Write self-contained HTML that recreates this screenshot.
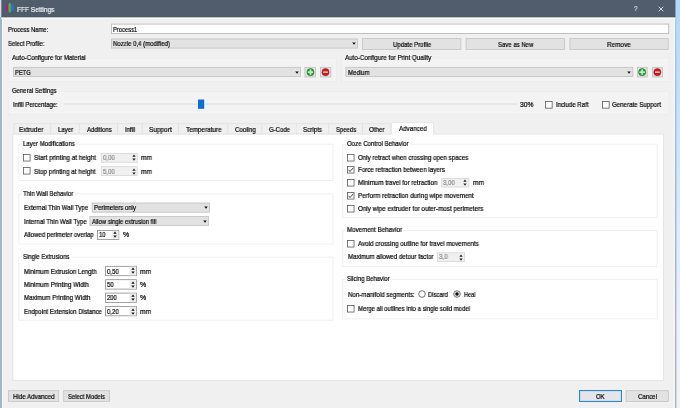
<!DOCTYPE html>
<html><head><meta charset="utf-8"><title>FFF Settings</title>
<style>
html,body{margin:0;padding:0;}
body{width:680px;height:408px;overflow:hidden;position:relative;background:#f0f0f0;font-family:"Liberation Sans", sans-serif;}
div,span,svg{position:absolute;display:block;}
span{will-change:transform;white-space:pre;line-height:8.0px;font-family:"Liberation Sans", sans-serif;-webkit-text-stroke:0.2px currentColor;transform-origin:0 0;}
svg{overflow:visible;}
</style></head><body>
<svg style="left:0;top:0" width="680" height="408" viewBox="0 0 680 408">
<rect x="0.00" y="0.00" width="680.00" height="408.00" fill="#f0f0f0"/>
<defs><linearGradient id="rs" x1="0" y1="0" x2="0" y2="1"><stop offset="0" stop-color="#b4d8f5"/><stop offset="0.3" stop-color="#c7e4fa"/><stop offset="0.55" stop-color="#dbecfb"/><stop offset="0.8" stop-color="#eaf2fa"/><stop offset="1" stop-color="#f0f3f6"/></linearGradient></defs>
<defs><linearGradient id="re" x1="0" y1="0" x2="0" y2="1"><stop offset="0" stop-color="#a6c9ea"/><stop offset="0.25" stop-color="#a6bdd2"/><stop offset="0.45" stop-color="#a8b5c1"/><stop offset="1" stop-color="#aab2ba"/></linearGradient></defs>
<rect x="675.40" y="0.00" width="4.60" height="408.00" fill="url(#rs)"/>
<rect x="673.80" y="17.00" width="1.20" height="391.00" fill="#fcfcfd"/>
<rect x="674.90" y="17.00" width="1.50" height="391.00" fill="url(#re)"/>
<rect x="0.00" y="0.00" width="1.40" height="17.00" fill="#cfe2f3"/>
<rect x="0.00" y="17.00" width="2.00" height="391.00" fill="#a1b5ce"/>
<rect x="2.00" y="17.00" width="1.20" height="391.00" fill="#f8f9fa"/>
<rect x="1.30" y="17.00" width="674.20" height="2.00" fill="#fbfcfd"/>
<rect x="1.30" y="0.00" width="674.20" height="16.40" fill="#515d6c"/>
<rect x="1.30" y="16.20" width="674.20" height="1.10" fill="#38424d"/>
<rect x="111.40" y="24.10" width="557.30" height="9.40" fill="#ffffff" stroke="#b4b4b4" stroke-width="0.8"/>
<rect x="111.40" y="39.00" width="246.00" height="9.10" fill="#e2e2e2" stroke="#c0c0c0" stroke-width="0.8"/>
<rect x="362.40" y="38.60" width="98.50" height="10.80" fill="#e2e2e2" stroke="#c4c4c4" stroke-width="0.8"/>
<rect x="466.10" y="38.60" width="98.50" height="10.80" fill="#e2e2e2" stroke="#c4c4c4" stroke-width="0.8"/>
<rect x="569.90" y="38.60" width="98.30" height="10.80" fill="#e2e2e2" stroke="#c4c4c4" stroke-width="0.8"/>
<rect x="8.40" y="58.00" width="328.20" height="23.60" fill="#f3f3f3" stroke="#ebebeb" stroke-width="0.8"/>
<rect x="10.50" y="54.60" width="77.00" height="6.00" fill="#f3f3f3"/>
<rect x="341.40" y="58.00" width="327.60" height="23.60" fill="#f3f3f3" stroke="#ebebeb" stroke-width="0.8"/>
<rect x="343.00" y="54.60" width="89.50" height="6.00" fill="#f3f3f3"/>
<rect x="8.40" y="91.60" width="660.60" height="22.80" fill="#f3f3f3" stroke="#ebebeb" stroke-width="0.8"/>
<rect x="10.50" y="88.20" width="47.75" height="6.00" fill="#f3f3f3"/>
<rect x="13.40" y="67.30" width="287.00" height="9.20" fill="#e2e2e2" stroke="#c0c0c0" stroke-width="0.8"/>
<rect x="304.90" y="67.30" width="10.50" height="9.70" fill="#e2e2e2" stroke="#c0c0c0" stroke-width="0.8"/>
<rect x="320.40" y="67.30" width="10.50" height="9.70" fill="#e2e2e2" stroke="#c0c0c0" stroke-width="0.8"/>
<rect x="345.90" y="67.30" width="287.00" height="9.20" fill="#e2e2e2" stroke="#c0c0c0" stroke-width="0.8"/>
<rect x="637.40" y="67.30" width="9.80" height="9.70" fill="#e2e2e2" stroke="#c0c0c0" stroke-width="0.8"/>
<rect x="652.40" y="67.30" width="10.20" height="9.70" fill="#e2e2e2" stroke="#c0c0c0" stroke-width="0.8"/>
<rect x="63.50" y="103.40" width="453.50" height="1.40" fill="#e3e3e3"/>
<rect x="198.00" y="99.50" width="6.20" height="9.30" fill="#0a6fd8"/>
<rect x="12.80" y="134.00" width="650.80" height="246.40" fill="#ffffff" stroke="#e0e0e0" stroke-width="0.8"/>
<rect x="14.15" y="123.80" width="376.70" height="10.10" fill="#f0f0f0" stroke="#e0e0e0" stroke-width="0.8"/>
<rect x="50.35" y="123.40" width="0.80" height="10.80" fill="#e0e0e0"/>
<rect x="79.10" y="123.40" width="0.80" height="10.80" fill="#e0e0e0"/>
<rect x="117.10" y="123.40" width="0.80" height="10.80" fill="#e0e0e0"/>
<rect x="141.80" y="123.40" width="0.80" height="10.80" fill="#e0e0e0"/>
<rect x="178.00" y="123.40" width="0.80" height="10.80" fill="#e0e0e0"/>
<rect x="227.40" y="123.40" width="0.80" height="10.80" fill="#e0e0e0"/>
<rect x="261.35" y="123.40" width="0.80" height="10.80" fill="#e0e0e0"/>
<rect x="295.85" y="123.40" width="0.80" height="10.80" fill="#e0e0e0"/>
<rect x="328.35" y="123.40" width="0.80" height="10.80" fill="#e0e0e0"/>
<rect x="362.10" y="123.40" width="0.80" height="10.80" fill="#e0e0e0"/>
<rect x="391.00" y="122.20" width="42.90" height="12.60" fill="#ffffff"/>
<path d="M391.4 134.3 V122.6 H433.5 V134.3" fill="none" stroke="#dedede" stroke-width="0.8"/>
<rect x="18.80" y="144.20" width="314.20" height="36.20" fill="none" stroke="#ececec" stroke-width="0.8"/>
<rect x="21.50" y="140.80" width="55.00" height="6.00" fill="#ffffff"/>
<rect x="18.80" y="193.90" width="314.20" height="50.20" fill="none" stroke="#ececec" stroke-width="0.8"/>
<rect x="21.50" y="190.50" width="53.50" height="6.00" fill="#ffffff"/>
<rect x="18.80" y="257.10" width="314.20" height="63.10" fill="none" stroke="#ececec" stroke-width="0.8"/>
<rect x="21.50" y="253.70" width="49.75" height="6.00" fill="#ffffff"/>
<rect x="342.80" y="144.20" width="314.30" height="73.50" fill="none" stroke="#ececec" stroke-width="0.8"/>
<rect x="345.50" y="140.80" width="64.75" height="6.00" fill="#ffffff"/>
<rect x="342.80" y="230.50" width="314.30" height="36.20" fill="none" stroke="#ececec" stroke-width="0.8"/>
<rect x="345.50" y="227.10" width="58.25" height="6.00" fill="#ffffff"/>
<rect x="342.80" y="279.30" width="314.30" height="39.60" fill="none" stroke="#ececec" stroke-width="0.8"/>
<rect x="345.50" y="275.90" width="45.75" height="6.00" fill="#ffffff"/>
<rect x="101.30" y="153.40" width="35.90" height="8.80" fill="#f0f0f0" stroke="#d6d6d6" stroke-width="0.8"/>
<rect x="101.30" y="166.70" width="35.90" height="8.90" fill="#f0f0f0" stroke="#d6d6d6" stroke-width="0.8"/>
<rect x="92.15" y="203.00" width="117.35" height="9.20" fill="#e2e2e2" stroke="#c0c0c0" stroke-width="0.8"/>
<rect x="89.90" y="216.40" width="118.60" height="9.20" fill="#e2e2e2" stroke="#c0c0c0" stroke-width="0.8"/>
<rect x="97.40" y="230.40" width="21.40" height="9.00" fill="#ffffff" stroke="#8c8c8c" stroke-width="0.8"/>
<rect x="111.60" y="230.80" width="6.80" height="8.20" fill="#eeeeee"/>
<rect x="105.60" y="266.30" width="30.90" height="9.40" fill="#ffffff" stroke="#8c8c8c" stroke-width="0.8"/>
<rect x="129.30" y="266.70" width="6.80" height="8.60" fill="#eeeeee"/>
<rect x="105.60" y="279.70" width="30.90" height="9.40" fill="#ffffff" stroke="#8c8c8c" stroke-width="0.8"/>
<rect x="129.30" y="280.10" width="6.80" height="8.60" fill="#eeeeee"/>
<rect x="105.60" y="293.10" width="30.90" height="9.40" fill="#ffffff" stroke="#8c8c8c" stroke-width="0.8"/>
<rect x="129.30" y="293.50" width="6.80" height="8.60" fill="#eeeeee"/>
<rect x="105.60" y="306.40" width="30.90" height="9.40" fill="#ffffff" stroke="#8c8c8c" stroke-width="0.8"/>
<rect x="129.30" y="306.80" width="6.80" height="8.60" fill="#eeeeee"/>
<rect x="441.70" y="178.40" width="27.20" height="8.70" fill="#f0f0f0" stroke="#d6d6d6" stroke-width="0.8"/>
<rect x="437.40" y="252.80" width="27.20" height="8.60" fill="#f0f0f0" stroke="#d6d6d6" stroke-width="0.8"/>
<rect x="8.40" y="390.70" width="50.00" height="10.70" fill="#e2e2e2" stroke="#c4c4c4" stroke-width="0.8"/>
<rect x="63.70" y="390.70" width="45.90" height="10.70" fill="#e2e2e2" stroke="#c4c4c4" stroke-width="0.8"/>
<rect x="579.55" y="390.55" width="41.90" height="10.90" fill="#e3e5e8" stroke="#2f86d8" stroke-width="1.1"/>
<rect x="626.10" y="390.70" width="42.20" height="10.70" fill="#e2e2e2" stroke="#c4c4c4" stroke-width="0.8"/>
</svg>
<svg style="left:3.00px;top:1.00px" width="14" height="14" viewBox="0 0 14 14"><ellipse cx="3.8" cy="6.7" rx="1.4" ry="3.5" fill="#b81c7c"/><ellipse cx="6.8" cy="6.8" rx="1.6" ry="5.0" fill="#4cab4b"/><ellipse cx="9.8" cy="6.7" rx="1.4" ry="3.5" fill="#2277cb"/></svg>
<span style="left:16.87px;top:6.17px;font-size:7.0px;transform:scaleX(0.9344);color:#f6f8fa;-webkit-text-stroke:0.18px #f6f8fa;">FFF Settings</span>
<span style="left:633.80px;top:5.24px;font-size:6.8px;transform:scaleX(0.9000);color:#d8dde3;">?</span>
<svg style="left:657.20px;top:4.80px" width="8" height="8" viewBox="0 0 8 8"><path d="M1.7 1.7 L6.3 6.3 M6.3 1.7 L1.7 6.3" stroke="#eceff3" stroke-width="0.85" fill="none"/></svg>
<span style="left:7.60px;top:25.94px;font-size:6.8px;transform:scaleX(0.8662);color:#050505;">Process Name:</span>
<span style="left:113.10px;top:25.84px;font-size:6.8px;transform:scaleX(0.8556);color:#050505;">Process1</span>
<span style="left:7.60px;top:40.24px;font-size:6.8px;transform:scaleX(0.8703);color:#050505;">Select Profile:</span>
<span style="left:113.09px;top:40.24px;font-size:6.8px;transform:scaleX(0.8853);color:#050505;">Nozzle 0,4 (modified)</span>
<svg style="left:351.70px;top:42.15px" width="4" height="3" viewBox="0 0 4 3"><path d="M0.2 0.6 L3.8 0.6 L2 2.7 Z" fill="#111"/></svg>
<span style="left:392.52px;top:40.54px;font-size:6.8px;transform:scaleX(0.8879);color:#050505;">Update Profile</span>
<span style="left:497.73px;top:40.54px;font-size:6.8px;transform:scaleX(0.8802);color:#050505;">Save as New</span>
<span style="left:607.17px;top:40.54px;font-size:6.8px;transform:scaleX(0.9383);color:#050505;">Remove</span>
<span style="left:12.08px;top:53.84px;font-size:6.8px;transform:scaleX(0.9037);color:#050505;">Auto-Configure for Material</span>
<span style="left:344.58px;top:53.84px;font-size:6.8px;transform:scaleX(0.9132);color:#050505;">Auto-Configure for Print Quality</span>
<span style="left:12.09px;top:87.14px;font-size:6.8px;transform:scaleX(0.8787);color:#050505;">General Settings</span>
<span style="left:15.10px;top:68.54px;font-size:6.8px;transform:scaleX(0.8506);color:#050505;">PETG</span>
<svg style="left:294.70px;top:70.50px" width="4" height="3" viewBox="0 0 4 3"><path d="M0.2 0.6 L3.8 0.6 L2 2.7 Z" fill="#111"/></svg>
<svg style="left:304.50px;top:66.90px" width="11.30" height="10.50" viewBox="0 0 11.30 10.50"><circle cx="5.50" cy="5.15" r="3.55" fill="#2c9638"/><circle cx="5.50" cy="5.15" r="3.55" fill="none" stroke="#237a2d" stroke-width="0.6"/><path d="M3.60 5.15 H7.40 M5.50 3.25 V7.05" stroke="#b6efbf" stroke-width="1.9" stroke-linecap="round"/></svg>
<svg style="left:320.00px;top:66.90px" width="11.30" height="10.50" viewBox="0 0 11.30 10.50"><circle cx="5.50" cy="5.15" r="3.55" fill="#cf1720"/><circle cx="5.50" cy="5.15" r="3.55" fill="none" stroke="#b0121a" stroke-width="0.6"/><path d="M3.60 5.15 H7.40" stroke="#ffe2e2" stroke-width="1.15" stroke-linecap="round"/></svg>
<span style="left:347.59px;top:68.54px;font-size:6.8px;transform:scaleX(0.8889);color:#050505;">Medium</span>
<svg style="left:627.20px;top:70.50px" width="4" height="3" viewBox="0 0 4 3"><path d="M0.2 0.6 L3.8 0.6 L2 2.7 Z" fill="#111"/></svg>
<svg style="left:637.00px;top:66.90px" width="10.60" height="10.50" viewBox="0 0 10.60 10.50"><circle cx="5.15" cy="5.15" r="3.55" fill="#2c9638"/><circle cx="5.15" cy="5.15" r="3.55" fill="none" stroke="#237a2d" stroke-width="0.6"/><path d="M3.25 5.15 H7.05 M5.15 3.25 V7.05" stroke="#b6efbf" stroke-width="1.9" stroke-linecap="round"/></svg>
<svg style="left:652.00px;top:66.90px" width="11.00" height="10.50" viewBox="0 0 11.00 10.50"><circle cx="5.35" cy="5.15" r="3.55" fill="#cf1720"/><circle cx="5.35" cy="5.15" r="3.55" fill="none" stroke="#b0121a" stroke-width="0.6"/><path d="M3.45 5.15 H7.25" stroke="#ffe2e2" stroke-width="1.15" stroke-linecap="round"/></svg>
<span style="left:13.09px;top:101.34px;font-size:6.8px;transform:scaleX(0.8837);color:#050505;">Infill Percentage:</span>
<span style="left:519.75px;top:101.34px;font-size:6.8px;transform:scaleX(0.9920);color:#050505;">30%</span>
<svg style="left:545.00px;top:100.60px" width="7.6" height="7.6" viewBox="0 0 7.6 7.6"><rect x="0.45" y="0.45" width="6.70" height="6.70" fill="#fff" stroke="#505050" stroke-width="0.75"/></svg>
<span style="left:555.84px;top:101.34px;font-size:6.8px;transform:scaleX(0.8958);color:#050505;">Include Raft</span>
<svg style="left:602.20px;top:100.60px" width="7.6" height="7.6" viewBox="0 0 7.6 7.6"><rect x="0.45" y="0.45" width="6.70" height="6.70" fill="#fff" stroke="#505050" stroke-width="0.75"/></svg>
<span style="left:611.98px;top:101.34px;font-size:6.8px;transform:scaleX(0.9038);color:#050505;">Generate Support</span>
<span style="left:19.32px;top:125.59px;font-size:6.8px;transform:scaleX(0.9440);color:#050505;">Extruder</span>
<span style="left:57.59px;top:125.59px;font-size:6.8px;transform:scaleX(0.8962);color:#050505;">Layer</span>
<span style="left:86.84px;top:125.59px;font-size:6.8px;transform:scaleX(0.8849);color:#050505;">Additions</span>
<span style="left:125.10px;top:125.59px;font-size:6.8px;transform:scaleX(0.8475);color:#050505;">Infill</span>
<span style="left:148.82px;top:125.59px;font-size:6.8px;transform:scaleX(0.9554);color:#050505;">Support</span>
<span style="left:185.57px;top:125.59px;font-size:6.8px;transform:scaleX(0.9304);color:#050505;">Temperature</span>
<span style="left:234.59px;top:125.59px;font-size:6.8px;transform:scaleX(0.8997);color:#050505;">Cooling</span>
<span style="left:268.84px;top:125.59px;font-size:6.8px;transform:scaleX(0.8819);color:#050505;">G-Code</span>
<span style="left:303.33px;top:125.59px;font-size:6.8px;transform:scaleX(0.9143);color:#050505;">Scripts</span>
<span style="left:335.84px;top:125.59px;font-size:6.8px;transform:scaleX(0.8780);color:#050505;">Speeds</span>
<span style="left:369.33px;top:125.59px;font-size:6.8px;transform:scaleX(0.9118);color:#050505;">Other</span>
<span style="left:398.83px;top:125.14px;font-size:6.8px;transform:scaleX(0.9178);color:#050505;">Advanced</span>
<span style="left:23.09px;top:139.84px;font-size:6.8px;transform:scaleX(0.8837);color:#050505;">Layer Modifications</span>
<span style="left:23.09px;top:189.84px;font-size:6.8px;transform:scaleX(0.8847);color:#050505;">Thin Wall Behavior</span>
<span style="left:23.09px;top:253.14px;font-size:6.8px;transform:scaleX(0.8855);color:#050505;">Single Extrusions</span>
<span style="left:347.09px;top:139.84px;font-size:6.8px;transform:scaleX(0.8943);color:#050505;">Ooze Control Behavior</span>
<span style="left:347.08px;top:226.34px;font-size:6.8px;transform:scaleX(0.9098);color:#050505;">Movement Behavior</span>
<span style="left:347.09px;top:275.34px;font-size:6.8px;transform:scaleX(0.8718);color:#050505;">Slicing Behavior</span>
<svg style="left:23.40px;top:154.00px" width="7.5" height="7.5" viewBox="0 0 7.5 7.5"><rect x="0.45" y="0.45" width="6.60" height="6.60" fill="#fff" stroke="#505050" stroke-width="0.75"/></svg>
<span style="left:33.82px;top:154.34px;font-size:6.8px;transform:scaleX(0.9323);color:#050505;">Start printing at height</span>
<span style="left:102.99px;top:154.34px;font-size:6.8px;transform:scaleX(0.8878);color:#8c8c8c;">0,00</span>
<svg style="left:131.60px;top:154.20px" width="4" height="7.2" viewBox="0 0 4 7.2"><path d="M0.3 2.75 L2 0.45 L3.7 2.75 Z" fill="#222"/><path d="M0.3 4.45 L2 6.75 L3.7 4.45 Z" fill="#222"/></svg>
<span style="left:141.31px;top:154.34px;font-size:6.8px;transform:scaleX(0.9578);color:#050505;">mm</span>
<svg style="left:23.40px;top:167.30px" width="7.5" height="7.5" viewBox="0 0 7.5 7.5"><rect x="0.45" y="0.45" width="6.60" height="6.60" fill="#fff" stroke="#505050" stroke-width="0.75"/></svg>
<span style="left:33.82px;top:167.64px;font-size:6.8px;transform:scaleX(0.9298);color:#050505;">Stop printing at height</span>
<span style="left:102.99px;top:167.64px;font-size:6.8px;transform:scaleX(0.8878);color:#8c8c8c;">5,00</span>
<svg style="left:131.60px;top:167.55px" width="4" height="7.2" viewBox="0 0 4 7.2"><path d="M0.3 2.75 L2 0.45 L3.7 2.75 Z" fill="#222"/><path d="M0.3 4.45 L2 6.75 L3.7 4.45 Z" fill="#222"/></svg>
<span style="left:141.31px;top:167.64px;font-size:6.8px;transform:scaleX(0.9578);color:#050505;">mm</span>
<span style="left:24.33px;top:204.14px;font-size:6.8px;transform:scaleX(0.9014);color:#050505;">External Thin Wall Type</span>
<span style="left:93.84px;top:204.14px;font-size:6.8px;transform:scaleX(0.8895);color:#050505;">Perimeters only</span>
<svg style="left:203.80px;top:206.20px" width="4" height="3" viewBox="0 0 4 3"><path d="M0.2 0.6 L3.8 0.6 L2 2.7 Z" fill="#111"/></svg>
<span style="left:24.33px;top:217.54px;font-size:6.8px;transform:scaleX(0.9092);color:#050505;">Internal Thin Wall Type</span>
<span style="left:91.59px;top:217.54px;font-size:6.8px;transform:scaleX(0.8721);color:#050505;">Allow single extrusion fill</span>
<svg style="left:202.80px;top:219.60px" width="4" height="3" viewBox="0 0 4 3"><path d="M0.2 0.6 L3.8 0.6 L2 2.7 Z" fill="#111"/></svg>
<span style="left:24.34px;top:231.04px;font-size:6.8px;transform:scaleX(0.8875);color:#050505;">Allowed perimeter overlap</span>
<span style="left:99.10px;top:231.14px;font-size:6.8px;transform:scaleX(0.8595);color:#050505;">10</span>
<svg style="left:113.20px;top:231.30px" width="4" height="7.2" viewBox="0 0 4 7.2"><path d="M0.3 2.75 L2 0.45 L3.7 2.75 Z" fill="#111"/><path d="M0.3 4.45 L2 6.75 L3.7 4.45 Z" fill="#111"/></svg>
<span style="left:122.54px;top:231.04px;font-size:6.8px;transform:scaleX(1.0336);color:#050505;">%</span>
<span style="left:24.33px;top:267.64px;font-size:6.8px;transform:scaleX(0.9041);color:#050505;">Minimum Extrusion Length</span>
<span style="left:107.29px;top:267.64px;font-size:6.8px;transform:scaleX(0.8878);color:#050505;">0,50</span>
<svg style="left:130.90px;top:267.40px" width="4" height="7.2" viewBox="0 0 4 7.2"><path d="M0.3 2.75 L2 0.45 L3.7 2.75 Z" fill="#111"/><path d="M0.3 4.45 L2 6.75 L3.7 4.45 Z" fill="#111"/></svg>
<span style="left:140.06px;top:267.64px;font-size:6.8px;transform:scaleX(0.9710);color:#050505;">mm</span>
<span style="left:24.33px;top:281.04px;font-size:6.8px;transform:scaleX(0.9022);color:#050505;">Minimum Printing Width</span>
<span style="left:107.29px;top:281.04px;font-size:6.8px;transform:scaleX(0.8926);color:#050505;">50</span>
<svg style="left:130.90px;top:280.80px" width="4" height="7.2" viewBox="0 0 4 7.2"><path d="M0.3 2.75 L2 0.45 L3.7 2.75 Z" fill="#111"/><path d="M0.3 4.45 L2 6.75 L3.7 4.45 Z" fill="#111"/></svg>
<span style="left:140.04px;top:281.04px;font-size:6.8px;transform:scaleX(1.0336);color:#050505;">%</span>
<span style="left:24.33px;top:294.34px;font-size:6.8px;transform:scaleX(0.9028);color:#050505;">Maximum Printing Width</span>
<span style="left:107.30px;top:294.34px;font-size:6.8px;transform:scaleX(0.8595);color:#050505;">200</span>
<svg style="left:130.90px;top:294.20px" width="4" height="7.2" viewBox="0 0 4 7.2"><path d="M0.3 2.75 L2 0.45 L3.7 2.75 Z" fill="#111"/><path d="M0.3 4.45 L2 6.75 L3.7 4.45 Z" fill="#111"/></svg>
<span style="left:140.04px;top:294.34px;font-size:6.8px;transform:scaleX(1.0336);color:#050505;">%</span>
<span style="left:24.34px;top:307.64px;font-size:6.8px;transform:scaleX(0.8975);color:#050505;">Endpoint Extension Distance</span>
<span style="left:107.29px;top:307.64px;font-size:6.8px;transform:scaleX(0.8878);color:#050505;">0,20</span>
<svg style="left:130.90px;top:307.50px" width="4" height="7.2" viewBox="0 0 4 7.2"><path d="M0.3 2.75 L2 0.45 L3.7 2.75 Z" fill="#111"/><path d="M0.3 4.45 L2 6.75 L3.7 4.45 Z" fill="#111"/></svg>
<span style="left:140.06px;top:307.64px;font-size:6.8px;transform:scaleX(0.9710);color:#050505;">mm</span>
<svg style="left:347.30px;top:153.90px" width="7.5" height="7.5" viewBox="0 0 7.5 7.5"><rect x="0.45" y="0.45" width="6.60" height="6.60" fill="#fff" stroke="#505050" stroke-width="0.75"/></svg>
<span style="left:357.68px;top:153.94px;font-size:6.8px;transform:scaleX(0.9119);color:#050505;">Only retract when crossing open spaces</span>
<svg style="left:347.30px;top:165.80px" width="7.5" height="7.5" viewBox="0 0 7.5 7.5"><rect x="0.45" y="0.45" width="6.60" height="6.60" fill="#fff" stroke="#505050" stroke-width="0.75"/><path d="M1.6 3.90 L3.00 5.55 L6.30 1.80" fill="none" stroke="#222" stroke-width="0.85"/></svg>
<span style="left:357.68px;top:166.34px;font-size:6.8px;transform:scaleX(0.9138);color:#050505;">Force retraction between layers</span>
<svg style="left:347.30px;top:179.00px" width="7.5" height="7.5" viewBox="0 0 7.5 7.5"><rect x="0.45" y="0.45" width="6.60" height="6.60" fill="#fff" stroke="#505050" stroke-width="0.75"/></svg>
<span style="left:357.68px;top:179.34px;font-size:6.8px;transform:scaleX(0.9231);color:#050505;">Minimum travel for retraction</span>
<svg style="left:347.30px;top:192.10px" width="7.5" height="7.5" viewBox="0 0 7.5 7.5"><rect x="0.45" y="0.45" width="6.60" height="6.60" fill="#fff" stroke="#505050" stroke-width="0.75"/><path d="M1.6 3.90 L3.00 5.55 L6.30 1.80" fill="none" stroke="#222" stroke-width="0.85"/></svg>
<span style="left:357.68px;top:191.94px;font-size:6.8px;transform:scaleX(0.9284);color:#050505;">Perform retraction during wipe movement</span>
<svg style="left:347.30px;top:204.70px" width="7.5" height="7.5" viewBox="0 0 7.5 7.5"><rect x="0.45" y="0.45" width="6.60" height="6.60" fill="#fff" stroke="#505050" stroke-width="0.75"/></svg>
<span style="left:357.67px;top:204.94px;font-size:6.8px;transform:scaleX(0.9287);color:#050505;">Only wipe extruder for outer-most perimeters</span>
<span style="left:443.39px;top:179.34px;font-size:6.8px;transform:scaleX(0.8878);color:#8c8c8c;">3,00</span>
<svg style="left:463.30px;top:179.15px" width="4" height="7.2" viewBox="0 0 4 7.2"><path d="M0.3 2.75 L2 0.45 L3.7 2.75 Z" fill="#222"/><path d="M0.3 4.45 L2 6.75 L3.7 4.45 Z" fill="#222"/></svg>
<span style="left:473.06px;top:179.34px;font-size:6.8px;transform:scaleX(0.9710);color:#050505;">mm</span>
<svg style="left:347.30px;top:240.10px" width="7.5" height="7.5" viewBox="0 0 7.5 7.5"><rect x="0.45" y="0.45" width="6.60" height="6.60" fill="#fff" stroke="#505050" stroke-width="0.75"/></svg>
<span style="left:357.68px;top:240.14px;font-size:6.8px;transform:scaleX(0.9193);color:#050505;">Avoid crossing outline for travel movements</span>
<span style="left:348.08px;top:253.14px;font-size:6.8px;transform:scaleX(0.9052);color:#050505;">Maximum allowed detour factor</span>
<span style="left:439.08px;top:253.24px;font-size:6.8px;transform:scaleX(0.9256);color:#8c8c8c;">3,0</span>
<svg style="left:459.00px;top:253.50px" width="4" height="7.2" viewBox="0 0 4 7.2"><path d="M0.3 2.75 L2 0.45 L3.7 2.75 Z" fill="#222"/><path d="M0.3 4.45 L2 6.75 L3.7 4.45 Z" fill="#222"/></svg>
<span style="left:348.08px;top:290.54px;font-size:6.8px;transform:scaleX(0.9060);color:#050505;">Non-manifold segments:</span>
<svg style="left:417.50px;top:290.15px" width="8" height="8" viewBox="0 0 8 8"><circle cx="4" cy="4" r="3.3" fill="#fff" stroke="#444" stroke-width="0.75"/></svg>
<span style="left:428.40px;top:290.54px;font-size:6.8px;transform:scaleX(0.8613);color:#050505;">Discard</span>
<svg style="left:452.90px;top:290.15px" width="8" height="8" viewBox="0 0 8 8"><circle cx="4" cy="4" r="3.3" fill="#e4e4e4" stroke="#555" stroke-width="0.75"/><circle cx="4" cy="4" r="1.7" fill="#111"/></svg>
<span style="left:464.12px;top:290.54px;font-size:6.8px;transform:scaleX(0.8116);color:#050505;">Heal</span>
<svg style="left:347.30px;top:304.50px" width="7.5" height="7.5" viewBox="0 0 7.5 7.5"><rect x="0.45" y="0.45" width="6.60" height="6.60" fill="#fff" stroke="#505050" stroke-width="0.75"/></svg>
<span style="left:357.69px;top:304.74px;font-size:6.8px;transform:scaleX(0.8770);color:#050505;">Merge all outlines into a single solid model</span>
<span style="left:12.67px;top:392.94px;font-size:6.8px;transform:scaleX(0.9063);color:#050505;">Hide Advanced</span>
<span style="left:68.18px;top:392.94px;font-size:6.8px;transform:scaleX(0.8653);color:#050505;">Select Models</span>
<span style="left:596.23px;top:392.94px;font-size:6.8px;transform:scaleX(0.8700);color:#050505;">OK</span>
<span style="left:637.73px;top:392.94px;font-size:6.8px;transform:scaleX(0.8951);color:#050505;">Cancel</span>
</body></html>
